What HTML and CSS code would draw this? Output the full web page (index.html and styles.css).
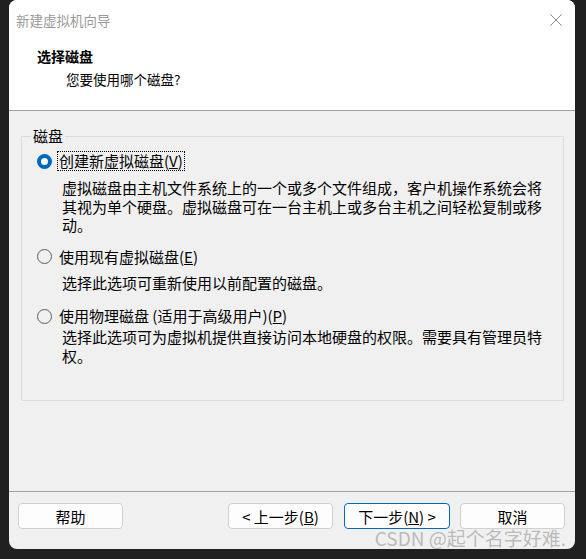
FILE: index.html
```html
<!DOCTYPE html>
<html lang="zh-CN">
<head>
    <meta charset="UTF-8">
    <meta name="viewport" content="width=device-width, initial-scale=1.0">
    <title>新建虚拟机向导</title>
    <link rel="stylesheet" href="styles.css">
</head>
<body>

<div class="window">
    <div class="header">
        <div class="titlebar">
            <span class="title">新建虚拟机向导</span>
            <svg class="close" width="12" height="12" viewBox="0 0 12 12">
                <path d="M0.5 0.5 L11.5 11.5 M11.5 0.5 L0.5 11.5" stroke="#8a8a8a" stroke-width="1" fill="none"/>
            </svg>
        </div>
        <div class="heading">选择磁盘</div>
        <div class="subheading">您要使用哪个磁盘?</div>
    </div>

    <div class="content">
        <fieldset class="group">
            <legend>磁盘</legend>

            <div class="option first">
                <span class="radio checked"></span>
                <span class="label focused">创建新虚拟磁盘(<u>V</u>)</span>
            </div>
            <p class="desc first">虚拟磁盘由主机文件系统上的一个或多个文件组成，客户机操作系统会将<br>其视为单个硬盘。虚拟磁盘可在一台主机上或多台主机之间轻松复制或移<br>动。</p>

            <div class="option second">
                <span class="radio"></span>
                <span class="label">使用现有虚拟磁盘(<u>E</u>)</span>
            </div>
            <p class="desc">选择此选项可重新使用以前配置的磁盘。</p>

            <div class="option third">
                <span class="radio"></span>
                <span class="label">使用物理磁盘 (适用于高级用户)(<u>P</u>)</span>
            </div>
            <p class="desc last">选择此选项可为虚拟机提供直接访问本地硬盘的权限。需要具有管理员特<br>权。</p>
        </fieldset>
    </div>

    <div class="footer">
        <button class="btn help">帮助</button>
        <button class="btn">&lt; 上一步(<u>B</u>)</button>
        <button class="btn default">下一步(<u>N</u>) &gt;</button>
        <button class="btn">取消</button>
    </div>

    <div class="watermark">CSDN @起个名字好难.</div>
</div>

</body>
</html>
```

FILE: styles.css
```css
body {
    margin: 0;
    background-color: #202020;
    font-family: "Noto Sans CJK SC", "Microsoft YaHei", sans-serif;
}
.window {
    position: relative;
    margin-left: 9px;
    width: 566px;
    height: 549px;
    background: #f0f0f0;
    border-radius: 8px;
    overflow: hidden;
    display: flex;
    flex-direction: column;
}
.header {
    height: 110px;
    background: white;
    border-bottom: 1px solid #a0a0a0;
}
.titlebar {
    display: flex;
    justify-content: space-between;
    align-items: center;
    height: 40px;
    padding: 0 13px 0 7px;
}
.title {
    font-size: 13.5px;
    color: #9a9a9a;
}
.heading {
    margin-left: 28px;
    margin-top: 6px;
    font-size: 14px;
    font-weight: bold;
    line-height: 20px;
    color: #000;
}
.subheading {
    margin-left: 57px;
    margin-top: 3px;
    font-size: 13.5px;
    line-height: 20px;
    color: #000;
}
.content {
    flex: 1;
    padding: 16px 11px 0 12px;
}
.group {
    margin: 0;
    height: 272px;
    padding: 0 0 0 15px;
    border: 1px solid #dcdcdc;
    font-size: 15px;
    color: #000;
}
.group legend {
    margin-left: -6px;
    padding: 0 2px;
    line-height: 18px;
}
.option {
    display: flex;
    align-items: center;
    gap: 5px;
    margin-top: 12px;
    height: 20px;
}
.option.first {
    margin-top: 6px;
}
.option.second {
    margin-top: 12px;
}
.option.third {
    margin-top: 14px;
}
.radio {
    box-sizing: border-box;
    width: 15px;
    height: 15px;
    border-radius: 50%;
    border: 1px solid #5c5c5c;
}
.radio.checked {
    border: 4px solid #0067c0;
    background: white;
}
.label {
    line-height: 18px;
    padding: 0 1px;
    border: 1px dotted transparent;
}
.label.focused {
    border-color: #000;
}
.desc {
    margin: 7px 0 0 25px;
    line-height: 18.5px;
}
.desc.first {
    margin-top: 8px;
}
.desc.last {
    margin-top: 2px;
}
.footer {
    height: 46px;
    border-top: 1px solid #a0a0a0;
    display: flex;
    align-items: flex-start;
    padding: 11px 9px 0 9px;
}
.btn {
    width: 105px;
    height: 26px;
    padding: 0;
    background: #fdfdfd;
    border: 1px solid #d0d0d0;
    border-radius: 4px;
    font-family: inherit;
    font-size: 15px;
    color: #000;
}
.help {
    margin-right: 105px;
}
.default {
    width: 106px;
    margin-left: 11px;
    margin-right: 10px;
    border-color: #0067c0;
}
.watermark {
    position: absolute;
    right: 9px;
    bottom: -2px;
    font-size: 19px;
    line-height: 26px;
    color: rgba(140, 140, 140, 0.55);
}
```
